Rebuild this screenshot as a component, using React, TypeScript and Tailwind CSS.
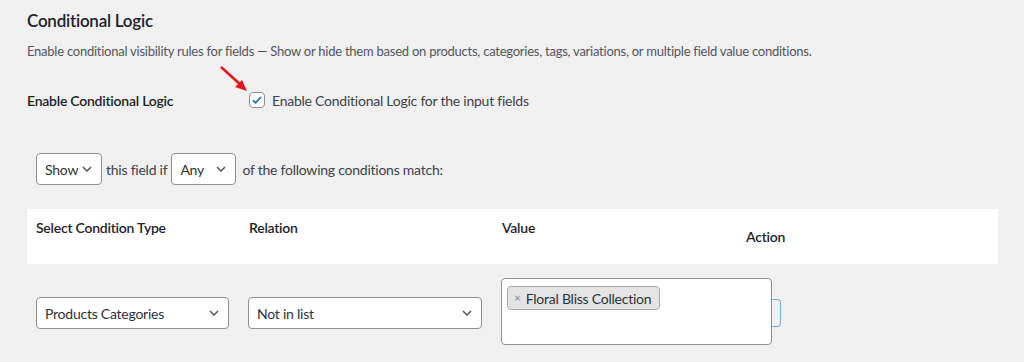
import { useState } from "react";

function Chevron() {
    return (
        <svg width="10" height="6" viewBox="0 0 10 6" className="shrink-0">
            <path d="M1 1l4 4 4-4" fill="none" stroke="#50575e" strokeWidth="1.5" />
        </svg>
    );
}

function Select({ value, className }: { value: string; className: string }) {
    return (
        <div
            className={`flex h-8 items-center justify-between rounded border border-[#8c8f94] bg-white pl-2 pr-[9px] text-[14px] text-[#2c3338] ${className}`}
        >
            <span>{value}</span>
            <Chevron />
        </div>
    );
}

export default function App() {
    const [enabled, setEnabled] = useState(true);

    return (
        <div
            className="relative min-h-[362px] w-[1024px] overflow-hidden bg-[#f0f0f1] px-[27px] tracking-[-0.015em] text-[#1d2327]"
            style={{ fontFamily: 'Lato, "Noto Sans", sans-serif' }}
        >
            <h2 className="flex h-[42px] items-center text-[17px] font-semibold">Conditional Logic</h2>
            <p className="h-[18px] text-[13px] leading-[18px] text-[#50575e]">
                Enable conditional visibility rules for fields — Show or hide them based on products,
                categories, tags, variations, or multiple field value conditions.
            </p>

            <div className="mt-6 flex h-8 items-center">
                <div className="w-[222px] text-[14px] font-semibold">Enable Conditional Logic</div>
                <label className="flex items-center gap-[7px] text-[14px] text-[#3c434a]">
                    <button
                        onClick={() => setEnabled(v => !v)}
                        className="flex h-4 w-4 items-center justify-center rounded border border-[#8c8f94] bg-white"
                    >
                        {enabled && (
                            <svg width="12" height="12" viewBox="0 0 12 12">
                                <path d="M2 6.2l2.6 2.6L10 2.8" fill="none" stroke="#3582c4" strokeWidth="2" />
                            </svg>
                        )}
                    </button>
                    Enable Conditional Logic for the input fields
                </label>
            </div>

            {/* red pointer arrow */}
            <svg className="absolute left-[214px] top-[62px]" width="40" height="34" viewBox="0 0 40 34">
                <line x1="7" y1="5" x2="28" y2="24" stroke="#e8121b" strokeWidth="2.5" />
                <polygon points="33,29 21,25 28,18" fill="#e8121b" />
            </svg>

            <div className="mt-[37px] flex items-center pl-[9px] text-[14px] text-[#3c434a]">
                <Select value="Show" className="w-[66px]" />
                <span className="px-1">this field if</span>
                <Select value="Any" className="w-[65px]" />
                <span className="pl-[6px]">of the following conditions match:</span>
            </div>

            <div className="mt-6 flex h-[55px] w-[971px] bg-white text-[14px] font-semibold">
                <div className="w-[222px] pl-[9px] pt-2">Select Condition Type</div>
                <div className="w-[253px] pt-2">Relation</div>
                <div className="w-[244px] pt-2">Value</div>
                <div className="flex items-center">Action</div>
            </div>

            <div className="flex items-start pl-[9px] pt-[14px]">
                <Select value="Products Categories" className="mt-[19px] w-[193px]" />
                <Select value="Not in list" className="ml-[19px] mt-[19px] w-[234px]" />
                <div className="ml-[19px] h-[67px] w-[271px] rounded border border-[#8c8f94] bg-white p-[5px]">
                    <span className="inline-flex h-6 items-center gap-[5px] rounded border border-[#aaa] bg-[#e4e4e4] pl-[6px] pr-[8px] text-[14px] text-[#2c3338]">
                        <span className="text-[12px] text-[#888]">×</span>
                        Floral Bliss Collection
                    </span>
                </div>
                <div className="mt-[21px] h-[28px] w-[9px] rounded-r border border-l-0 border-[#72aee6]" />
            </div>
        </div>
    );
}
